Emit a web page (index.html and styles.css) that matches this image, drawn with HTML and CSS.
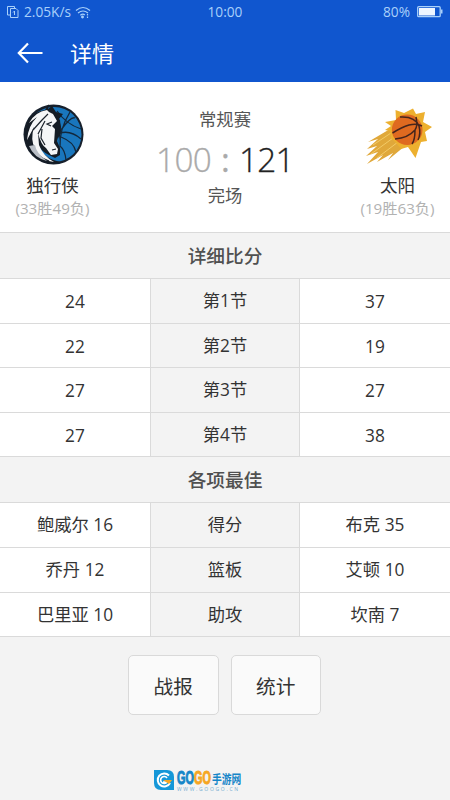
FILE: index.html
```
<!DOCTYPE html>
<html lang="zh-CN">
<head>
  <meta charset="UTF-8">
  <title>详情</title>
  <link rel="stylesheet" href="styles.css">
</head>
<body>

  <header>
    <div class="status">
      <div class="status-left">
        <svg width="12" height="14" viewBox="0 0 12 14" fill="none" stroke="currentColor">
          <path d="M3 10H.5V1.500h7V3M3.500 3.500h5.500l2 2v7H3.500zM7.500 6v4M6 7.500L7.500 6"/>
        </svg>
        <span class="speed">2.05K/s</span>
        <svg width="16" height="13" viewBox="0 0 16 13" fill="none" stroke="currentColor" stroke-width="1.200">
          <path d="M1 4.500Q8-1.500 15 4.500M3 7q5-4 10 0M5.300 9.300q2.700-2 4.500-.3"/>
          <circle cx="7.500" cy="11" r=".8" fill="currentColor"/>
          <path d="M12.500 8v1.500M12.500 10.500V12"/>
        </svg>
      </div>
      <div class="clock">10:00</div>
      <div class="status-right">
        <span>80%</span>
        <svg width="26" height="12" viewBox="0 0 26 12">
          <rect x=".7" y=".7" width="22.500" height="10" rx="1" fill="none" stroke="#a9d0fa" stroke-width="1.300"/>
          <rect x="2" y="2" width="16" height="7.500" fill="#eef5ff"/>
          <path d="M24 3.500h1.500v4H24z" fill="#a9d0fa"/>
        </svg>
      </div>
    </div>
    <div class="title-bar">
      <svg width="26" height="22" viewBox="0 0 26 22" fill="none" stroke="#fff" stroke-width="2.200">
        <path d="M11 1.500L1.800 11l9.200 9.500M1.800 11H25.500"/>
      </svg>
      <h1>详情</h1>
    </div>
  </header>

  <div class="match">
    <div class="team">
      <svg width="64" height="64" viewBox="0 0 64 64">
        <circle cx="32.500" cy="32.500" r="30" fill="#17202c"/>
        <circle cx="33" cy="32.500" r="27.500" fill="#1976bd"/>
        <path d="M36 9Q45 22 60 27M40 28Q50 14 54 16M39 31Q50 28 60 37M40 35Q53 40 55 50M39 44Q44 48 45 58M49 10Q38 28 39 45" fill="none" stroke="#12283d" stroke-width="1.300"/>
        <path d="M28 2L24 8Q10 10 5 24Q0 42 13 54Q24 65 40 60Q22 57 17 43Q21 50 28 53L34 56L39 53L39 46L36 39L40 25L38 17L42 12L35 10L31 4L27 7z" fill="#151c25"/>
        <path d="M26 8Q14 10 8 21L16 15Q7 24 6 38L13 25Q9 38 14 46Q16 57 33 60Q22 54 18 43L17 31Q20 43 25 46L30 53L36 52L37 47L33 41L34 27L31 24L36 19L32 12L28 10z" fill="#f5f6f7"/>
        <path d="M27 12L21 18L12 28M24 19L17 32M31 20L26 22L30 24M21 27L20 36L24 43M10 43Q14 54 28 59M31 48l4-1" fill="none" stroke="#1b222b" stroke-width="1.200"/>
        <path d="M32 11L37 19L34 26L38 37L37 43L40 29L39 18z" fill="#151c25"/>
        <path d="M8 44Q13 56 26 59Q15 51 14 43z" fill="#b9bec6"/>
      </svg>
      <div class="name">独行侠</div>
      <div class="record">(33胜49负)</div>
    </div>
    <div class="result">
      <div class="stage">常规赛</div>
      <div class="score"><span class="lose">100</span><span class="colon">:</span><span>121</span></div>
      <div class="stage">完场</div>
    </div>
    <div class="team">
      <svg width="70" height="64" viewBox="0 0 70 64">
        <path d="M27 27L5 40L15 37L4 47L14 44L3 54L15 50L4 62L20 53L14 60L30 51L25 58L42 44L34 30z" fill="#e0a83a"/>
        <path d="M28 31L10 43M30 36L8 52M35 40L14 56" stroke="#f3cb66"/>
        <path d="M32.500 8L41 11L50 6.500L53 12L62 10L60 20L69 25L62 30L64 39L58 40L52.500 56L45 45L38 47L34 42L28 36L27 29L22 28L28 24L22 20L33 18z" fill="#edb02f"/>
        <circle cx="44.200" cy="27.700" r="15.300" fill="#df6a20"/>
        <path d="M29.500 31Q39 25 46 23Q54 21 59 24M37 15Q52 14 56 24Q58 32 55 38M32 37Q45 36 52 28Q55 24 53 15M49 42Q52 38 52 28" fill="none" stroke="#45251c" stroke-width="1.500"/>
      </svg>
      <div class="name">太阳</div>
      <div class="record">(19胜63负)</div>
    </div>
  </div>

  <h2>详细比分</h2>
  <div class="table">
    <div>24</div><div class="label">第1节</div><div>37</div>
    <div>22</div><div class="label">第2节</div><div>19</div>
    <div>27</div><div class="label">第3节</div><div>27</div>
    <div>27</div><div class="label">第4节</div><div>38</div>
  </div>

  <h2>各项最佳</h2>
  <div class="table best">
    <div>鲍威尔 16</div><div class="label">得分</div><div>布克 35</div>
    <div>乔丹 12</div><div class="label">篮板</div><div>艾顿 10</div>
    <div>巴里亚 10</div><div class="label">助攻</div><div>坎南 7</div>
  </div>

  <div class="buttons">
    <button>战报</button>
    <button>统计</button>
  </div>

  <footer>
    <svg width="21" height="20" viewBox="0 0 21 20">
      <path d="M0 0h13q7 0 7 7v13H7q-7 0-7-7z" fill="#1597d8"/>
      <path d="M15 5.500A6.500 6.500 0 1 0 16 13" fill="none" stroke="#fff" stroke-width="2"/>
      <path d="M13 8A3.500 3.500 0 1 0 13 12H9" fill="none" stroke="#fff" stroke-width="1.600"/>
      <path d="M9 10h9l-3 4z" fill="#f6a623"/>
    </svg>
    <div class="brand">
      <div class="brand-name"><b class="blue">GO</b><b class="orange">GO</b><span>手游网</span></div>
      <div class="brand-url">WWW.GOOGO.CN</div>
    </div>
  </footer>

</body>
</html>
```

FILE: styles.css
```
* {
  box-sizing: border-box;
}

body {
  margin: 0;
  height: 800px;
  overflow: hidden;
  background-color: #f3f3f3;
  color: #333;
  font-family: "Open Sans", "Noto Sans CJK SC", sans-serif;
  font-size: 17.3px;
}

svg {
  display: block;
}

header {
  height: 82px;
  background-color: #1056cf;
}

.status {
  display: grid;
  grid-template-columns: 1fr auto 1fr;
  align-items: center;
  height: 24px;
  padding: 0 7px;
  color: #a9d0fa;
  font-size: 13.7px;
  line-height: 24px;
}

.status-left,
.status-right {
  display: flex;
  align-items: center;
}

.status-left {
  gap: 4px;
}

.status-right {
  justify-content: flex-end;
  gap: 7px;
}

.speed {
  margin-left: 1px;
}

.title-bar {
  display: flex;
  align-items: center;
  gap: 27px;
  height: 58px;
  padding-left: 17px;
}

h1 {
  margin: 0;
  color: #fff;
  font-size: 22px;
  font-weight: 400;
  line-height: 32px;
}

.match {
  display: flex;
  justify-content: space-between;
  height: 150px;
  background-color: #fff;
}

.team {
  display: flex;
  flex-direction: column;
  align-items: center;
  width: 105px;
  padding-top: 20px;
}

.name {
  margin-top: 6px;
  font-size: 17.5px;
  line-height: 26px;
}

.record {
  color: #b2b2b2;
  font-size: 15.2px;
  line-height: 20px;
}

.result {
  padding-top: 25px;
  text-align: center;
}

.stage {
  color: #555;
  font-size: 17.3px;
  line-height: 26px;
}

.score {
  display: flex;
  justify-content: center;
  height: 50px;
  color: #222;
  font-size: 33.3px;
  font-weight: 300;
  letter-spacing: -0.7px;
  line-height: 52px;
  -webkit-text-stroke: 0.3px currentColor;
}

.lose,
.colon {
  color: #aaa;
}

.colon {
  width: 28px;
  font-weight: 400;
}

h2 {
  margin: 0;
  height: 46px;
  border-top: 1px solid #dadada;
  color: #505050;
  font-size: 18.7px;
  font-weight: 500;
  line-height: 46px;
  text-align: center;
}

.table {
  display: grid;
  grid-template-columns: 150px 150px 150px;
  grid-auto-rows: 44.6px;
  background-color: #fff;
  line-height: 45px;
  text-align: center;
}

.table div {
  border-top: 1px solid #dadada;
}

.table .label {
  border-right: 1px solid #dadada;
  border-left: 1px solid #dadada;
  background-color: #f3f3f3;
  line-height: 44px;
}

.best,
.best .label {
  line-height: 44px;
}

.buttons {
  display: flex;
  justify-content: center;
  gap: 12px;
  padding-top: 18px;
  padding-right: 1px;
  border-top: 1px solid #dadada;
}

button {
  width: 90.5px;
  height: 60px;
  padding: 0;
  border: 1px solid #d9d9d9;
  border-radius: 5px;
  background-color: #fafafa;
  color: #333;
  font-family: inherit;
  font-size: 19.7px;
}

footer {
  display: flex;
  gap: 2px;
  margin-top: 55px;
  padding-left: 154px;
}

.brand-name {
  display: flex;
  align-items: center;
  height: 16px;
  color: #1686c8;
  font-size: 12.5px;
  font-weight: 700;
  white-space: nowrap;
}

.brand-name b {
  width: 17px;
  font-family: "Liberation Sans", sans-serif;
  font-size: 17.5px;
  transform: scaleX(0.62);
  transform-origin: left;
  -webkit-text-stroke: 1px currentColor;
}

.brand-name span {
  width: 29px;
  margin-left: 1px;
  transform: scaleX(0.78);
  transform-origin: left;
}

.brand-name .orange {
  color: #f6a623;
}

.brand-url {
  color: #75add0;
  font-size: 5px;
  letter-spacing: 1.7px;
  line-height: 6px;
}
```
